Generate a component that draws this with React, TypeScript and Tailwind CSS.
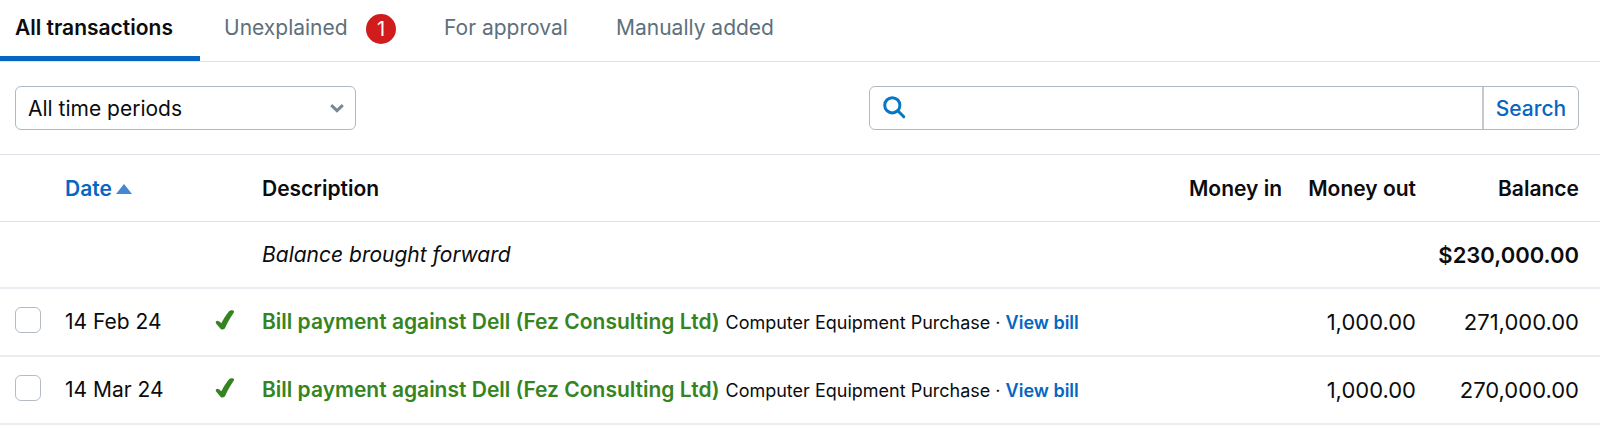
import { useState } from 'react';

const tabs = [
  { label: 'All transactions', width: 'min-w-[200px] pl-[15px]' },
  { label: 'Unexplained', count: 1, width: 'min-w-[220px] pl-6' },
  { label: 'For approval', width: 'min-w-[172px] pl-6' },
  { label: 'Manually added', width: 'min-w-[208px] pl-6' },
];

const transactions = [
  { id: 1, date: '14 Feb 24', moneyOut: '1,000.00', balance: '271,000.00' },
  { id: 2, date: '14 Mar 24', moneyOut: '1,000.00', balance: '270,000.00' },
];

function Tick() {
  return (
    <svg viewBox="0 0 20 20" className="mb-1 block h-5 w-5" aria-hidden="true">
      <path
        d="M1.100 13.400 C.2 12.200 1.300 10.600 2.800 10.900 C4.100 11.200 5.300 12 6.300 13.200 C8.600 8.800 11.300 4.700 14 1.300 C15.200-.1 18.200-.3 18.900 1.100 C19.200 1.800 18.900 2.500 18.500 3.100 C15.500 7.600 12.600 12.600 10.200 17.800 C9.600 19.300 7.200 20.200 5.700 18.900 Z"
        fill="#368420"
      />
    </svg>
  );
}

export default function App() {
  const [active, setActive] = useState('All transactions');
  const [query, setQuery] = useState('');

  return (
    <main className="w-full bg-white font-[Inter,sans-serif] text-[21px] leading-7 text-[#0b0c0e]">
      {/* Tabs */}
      <nav className="flex h-[62px] border-b border-[#dfe2e8]">
        {tabs.map((tab) => (
          <button
            key={tab.label}
            onClick={() => setActive(tab.label)}
            className={`flex h-[61px] items-start justify-start whitespace-nowrap border-b-5 pt-[14px] pr-6 ${tab.width} ${
              active === tab.label
                ? 'border-[#0666c2] font-semibold'
                : 'border-transparent text-[#5d707c]'
            }`}
          >
            {tab.label}
            {tab.count && (
              <span className="ml-auto flex h-[30px] w-[30px] items-center justify-center rounded-full bg-[#d01c1c] text-xl text-white">
                {tab.count}
              </span>
            )}
          </button>
        ))}
      </nav>

      {/* Filters */}
      <div className="flex justify-between gap-6 pt-6 pr-[21px] pb-6 pl-[15px]">
        <div className="relative w-[341px]">
          <select
            aria-label="Time period"
            className="h-11 w-full appearance-none rounded-md border border-[#b0b8c0] bg-white pt-[2px] pr-10 pl-3"
          >
            <option>All time periods</option>
          </select>
          <svg
            viewBox="0 0 14 9"
            className="pointer-events-none absolute top-[18px] right-3 h-[9px] w-[14px]"
            fill="none"
            stroke="#788993"
            strokeWidth="3"
            aria-hidden="true"
          >
            <path d="M1.200 1.200 7 6.700l5.800-5.500" />
          </svg>
        </div>

        <form
          onSubmit={(e) => e.preventDefault()}
          className="flex h-11 w-[710px] rounded-md border border-[#b0b8c0]"
        >
          <label htmlFor="search" className="flex items-center pb-[2px] pl-[13px]">
            <svg
              viewBox="0 0 23 23"
              className="h-[23px] w-[23px]"
              fill="none"
              stroke="#0677c4"
              strokeWidth="3"
              aria-hidden="true"
            >
              <circle cx="9.300" cy="9.300" r="7.600" />
              <path d="m14.800 14.800 6 6" strokeLinecap="round" />
            </svg>
          </label>
          <input
            id="search"
            type="text"
            aria-label="Search transactions"
            value={query}
            onChange={(e) => setQuery(e.target.value)}
            className="min-w-0 flex-1 px-3 outline-none"
          />
          <button className="w-24 border-l-2 border-[#c3c9cf] pt-[2px] font-medium text-[#0666c2]">
            Search
          </button>
        </form>
      </div>

      {/* Transactions */}
      <table className="w-full table-fixed border-t border-[#dcdfe8]">
        <colgroup>
          <col className="w-[65px]" />
          <col className="w-[150px]" />
          <col className="w-[47px]" />
          <col />
          <col className="w-[110px]" />
          <col className="w-[134px]" />
          <col className="w-[184px]" />
        </colgroup>
        <thead>
          <tr className="h-[67px] border-b border-[#dfe1e9] whitespace-nowrap">
            <td />
            <th className="pt-[2px] text-left font-semibold text-[#0666c2]">
              <a href="#date" className="flex items-center gap-1">
                Date
                <svg viewBox="0 0 16 10" className="h-[10px] w-4" aria-hidden="true">
                  <path d="M8 0l8 10H0z" fill="#4388d0" />
                </svg>
              </a>
            </th>
            <td />
            <th className="pt-[2px] text-left font-semibold">Description</th>
            <th className="pt-[2px] text-right font-semibold">Money in</th>
            <th className="pt-[2px] text-right font-semibold">Money out</th>
            <th className="pt-[2px] pr-[21px] text-right font-semibold">Balance</th>
          </tr>
        </thead>
        <tbody>
          <tr className="h-[66px] border-b-2 border-[#ebebf1]">
            <td colSpan={3} />
            <td className="pt-[2px] italic">Balance brought forward</td>
            <td colSpan={3} className="pt-[2px] pr-[21px] text-right text-[22px] font-semibold">
              $230,000.00
            </td>
          </tr>
          {transactions.map((row) => (
            <tr key={row.id} className="h-[68px] border-b-2 border-[#ebebf1] whitespace-nowrap">
              <td className="pb-1 pl-[15px]">
                <input
                  type="checkbox"
                  aria-label={`Select ${row.date}`}
                  className="block h-[26px] w-[26px] appearance-none rounded-md border border-[#b4bbc3] bg-white checked:bg-[#0666c2]"
                />
              </td>
              <td>{row.date}</td>
              <td>
                <Tick />
              </td>
              <td className="pt-[2px]">
                <a href="#transaction" className="font-semibold text-[#368420]">
                  Bill payment against Dell (Fez Consulting Ltd)
                </a>{' '}
                <span className="text-lg">
                  Computer Equipment Purchase ·{' '}
                  <a href="#bill" className="font-semibold text-[#0666c2]">
                    View bill
                  </a>
                </span>
              </td>
              <td />
              <td className="text-right text-[22px]">{row.moneyOut}</td>
              <td className="pr-[21px] text-right text-[22px]">{row.balance}</td>
            </tr>
          ))}
        </tbody>
      </table>
    </main>
  );
}
